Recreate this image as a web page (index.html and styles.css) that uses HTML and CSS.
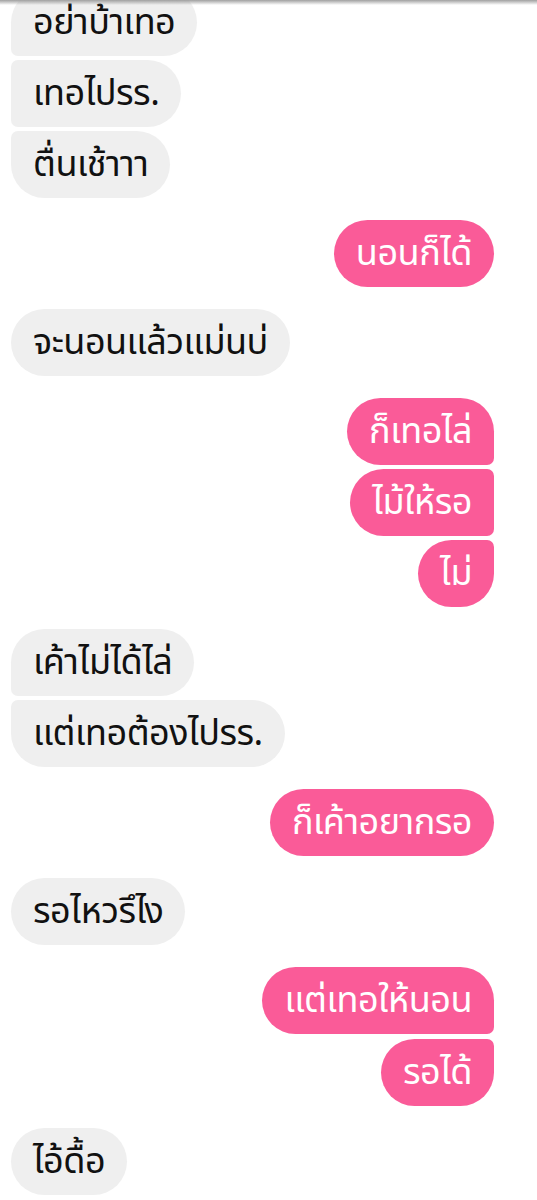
FILE: index.html
```html
<!DOCTYPE html>
<html lang="th">
<head>
<meta charset="utf-8">
<link rel="stylesheet" href="styles.css">
</head>
<body>
<div class="topshade"></div>
<main class="chat">
  <div class="group in">
    <div class="bubble first cut">อย่าบ้าเทอ</div>
    <div class="bubble mid">เทอไปรร.</div>
    <div class="bubble last">ตื่นเช้าาา</div>
  </div>
  <div class="group out">
    <div class="bubble">นอนก็ได้</div>
  </div>
  <div class="group in">
    <div class="bubble">จะนอนแล้วแม่นบ่</div>
  </div>
  <div class="group out">
    <div class="bubble first">ก็เทอไล่</div>
    <div class="bubble mid">ไม้ให้รอ</div>
    <div class="bubble last">ไม่</div>
  </div>
  <div class="group in">
    <div class="bubble first">เค้าไม่ได้ไล่</div>
    <div class="bubble last">แต่เทอต้องไปรร.</div>
  </div>
  <div class="group out">
    <div class="bubble">ก็เค้าอยากรอ</div>
  </div>
  <div class="group in">
    <div class="bubble">รอไหวรึไง</div>
  </div>
  <div class="group out wide">
    <div class="bubble first">แต่เทอให้นอน</div>
    <div class="bubble last">รอได้</div>
  </div>
  <div class="group in">
    <div class="bubble">ไอ้ดื้อ</div>
  </div>
</main>
</body>
</html>
```
FILE: styles.css
```css
html, body {
  margin: 0;
  padding: 0;
  background: #ffffff;
  overflow: hidden;
  height: 1200px;
}
body {
  position: relative;
  font-family: "Noto Sans Thai", "Noto Sans Thai UI", "Loma", "Garuda", "Noto Sans", "DejaVu Sans", sans-serif;
}
.topshade {
  position: absolute;
  top: 0;
  left: 0;
  right: 0;
  height: 5px;
  background: linear-gradient(#a0a0a0, rgba(255,255,255,0));
  z-index: 2;
}
.chat {
  display: flex;
  flex-direction: column;
  gap: 22px;
  margin-top: -11px;
  padding: 0 43px 0 11px;
}
.group {
  display: flex;
  flex-direction: column;
  gap: 4px;
}
.group.wide { gap: 5px; }
.group.in { align-items: flex-start; }
.group.out { align-items: flex-end; }
.bubble {
  box-sizing: border-box;
  height: 67px;
  display: flex;
  align-items: center;
  padding: 0 22px;
  font-size: 36px;
  line-height: 1;
  letter-spacing: -0.5px;
  border-radius: 34px;
  white-space: nowrap;
}
.in .bubble {
  background: #efefef;
  color: #111111;
}
.out .bubble {
  background: #fa5b98;
  color: #ffffff;
}
.in .first { border-bottom-left-radius: 7px; }
.in .mid { border-top-left-radius: 7px; border-bottom-left-radius: 7px; }
.in .last { border-top-left-radius: 7px; }
.out .first { border-bottom-right-radius: 7px; }
.out .mid { border-top-right-radius: 7px; border-bottom-right-radius: 7px; }
.out .last { border-top-right-radius: 7px; }
```
